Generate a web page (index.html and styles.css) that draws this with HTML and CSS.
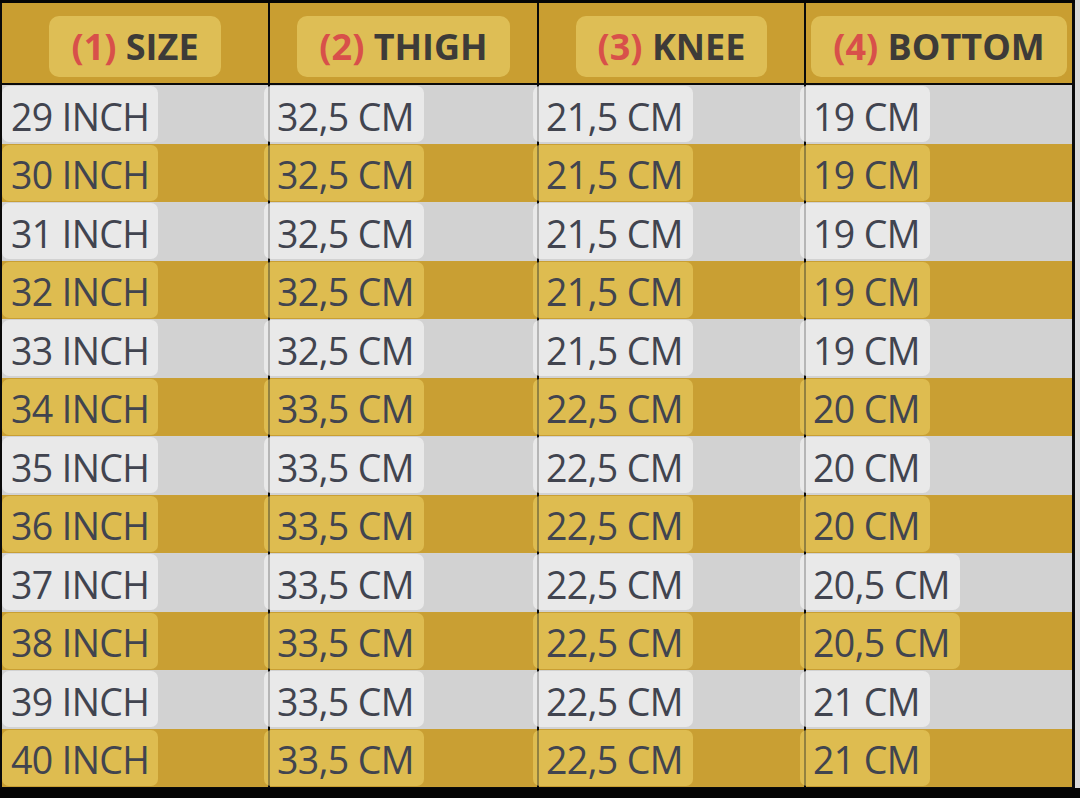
FILE: index.html
```html
<!DOCTYPE html>
<html>
<head>
<meta charset="utf-8">
<link rel="stylesheet" href="styles.css">
</head>
<body>
<div class="frame">
  <div class="table">
    <div class="row head">
      <div class="cell"><span class="hbox"><span class="num">(1)</span> SIZE</span></div>
      <div class="cell"><span class="hbox"><span class="num">(2)</span> THIGH</span></div>
      <div class="cell"><span class="hbox"><span class="num">(3)</span> KNEE</span></div>
      <div class="cell"><span class="hbox"><span class="num">(4)</span> BOTTOM</span></div>
    </div>
    <div class="row grey"><div class="cell"><span class="box">29 INCH</span></div><div class="cell"><span class="box">32,5 CM</span></div><div class="cell"><span class="box">21,5 CM</span></div><div class="cell"><span class="box">19 CM</span></div></div>
    <div class="row gold"><div class="cell"><span class="box">30 INCH</span></div><div class="cell"><span class="box">32,5 CM</span></div><div class="cell"><span class="box">21,5 CM</span></div><div class="cell"><span class="box">19 CM</span></div></div>
    <div class="row grey"><div class="cell"><span class="box">31 INCH</span></div><div class="cell"><span class="box">32,5 CM</span></div><div class="cell"><span class="box">21,5 CM</span></div><div class="cell"><span class="box">19 CM</span></div></div>
    <div class="row gold"><div class="cell"><span class="box">32 INCH</span></div><div class="cell"><span class="box">32,5 CM</span></div><div class="cell"><span class="box">21,5 CM</span></div><div class="cell"><span class="box">19 CM</span></div></div>
    <div class="row grey"><div class="cell"><span class="box">33 INCH</span></div><div class="cell"><span class="box">32,5 CM</span></div><div class="cell"><span class="box">21,5 CM</span></div><div class="cell"><span class="box">19 CM</span></div></div>
    <div class="row gold"><div class="cell"><span class="box">34 INCH</span></div><div class="cell"><span class="box">33,5 CM</span></div><div class="cell"><span class="box">22,5 CM</span></div><div class="cell"><span class="box">20 CM</span></div></div>
    <div class="row grey"><div class="cell"><span class="box">35 INCH</span></div><div class="cell"><span class="box">33,5 CM</span></div><div class="cell"><span class="box">22,5 CM</span></div><div class="cell"><span class="box">20 CM</span></div></div>
    <div class="row gold"><div class="cell"><span class="box">36 INCH</span></div><div class="cell"><span class="box">33,5 CM</span></div><div class="cell"><span class="box">22,5 CM</span></div><div class="cell"><span class="box">20 CM</span></div></div>
    <div class="row grey"><div class="cell"><span class="box">37 INCH</span></div><div class="cell"><span class="box">33,5 CM</span></div><div class="cell"><span class="box">22,5 CM</span></div><div class="cell"><span class="box">20,5 CM</span></div></div>
    <div class="row gold"><div class="cell"><span class="box">38 INCH</span></div><div class="cell"><span class="box">33,5 CM</span></div><div class="cell"><span class="box">22,5 CM</span></div><div class="cell"><span class="box">20,5 CM</span></div></div>
    <div class="row grey"><div class="cell"><span class="box">39 INCH</span></div><div class="cell"><span class="box">33,5 CM</span></div><div class="cell"><span class="box">22,5 CM</span></div><div class="cell"><span class="box">21 CM</span></div></div>
    <div class="row gold"><div class="cell"><span class="box">40 INCH</span></div><div class="cell"><span class="box">33,5 CM</span></div><div class="cell"><span class="box">22,5 CM</span></div><div class="cell"><span class="box">21 CM</span></div></div>
  </div>
  <div class="edge"></div>
</div>
</body>
</html>
```

FILE: styles.css
```css
html, body {
  margin: 0;
  padding: 0;
}
body {
  width: 1080px;
  height: 798px;
  background: #050505;
  overflow: hidden;
  font-family: "Open Sans", "Liberation Sans", sans-serif;
}
.frame {
  display: flex;
  height: 785px;
  padding-top: 3px;
}
.table {
  width: 1071px;
  padding-left: 2px;
  padding-right: 2px;
  background: #0a0a0a;
  display: flex;
  flex-direction: column;
}
.edge {
  width: 5px;
  background: #d9d9d9;
  margin-top: -3px;
}
.row {
  display: grid;
  grid-template-columns: 266px 267px 265px 266px;
  column-gap: 2px;
  height: 58.5px;
}
.row.head {
  height: 80px;
  margin-bottom: 2px;
}
.cell {
  display: flex;
  align-items: center;
  min-width: 0;
}
.row + .row .cell + .cell .box {
  margin-left: -6px;
  padding-left: 13px;
  padding-right: 10px;
}
.head .cell {
  background: #c99e31;
  justify-content: center;
}
.grey .cell {
  background: #d2d2d2;
}
.gold .cell {
  background: #c99f33;
}
.hbox {
  display: inline-flex;
  align-items: center;
  height: 61px;
  margin-top: 11px;
  padding: 0 22px;
  border-radius: 10px;
  background: rgba(236, 212, 110, 0.6);
  font-weight: 700;
  font-size: 36px;
  color: #3d3b38;
  white-space: pre;
  position: relative;
  top: -2px;
}
.num {
  color: #d8504a;
}
.box {
  display: inline-flex;
  align-items: center;
  height: 56px;
  padding: 0 9px;
  border-radius: 7px;
  font-size: 37.5px;
  letter-spacing: -0.6px;
  color: #41444f;
  white-space: pre;
  padding-top: 4px;
  box-sizing: border-box;
}
.grey .box {
  background: rgba(240, 240, 240, 0.75);
}
.gold .box {
  background: rgba(236, 208, 100, 0.6);
}
```
